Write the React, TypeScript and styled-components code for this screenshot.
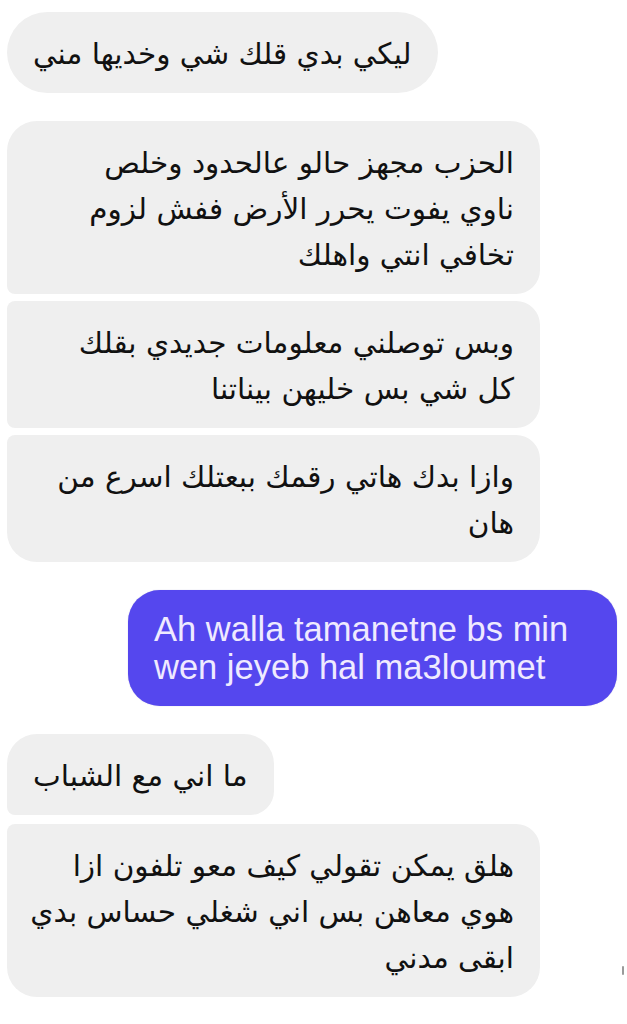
import React from "react";
import styled, { createGlobalStyle, css } from "styled-components";

const Global = createGlobalStyle`
  html, body { margin: 0; padding: 0; background: #ffffff; }
  body { width: 627px; height: 1024px; overflow: hidden; }
`;

const Page = styled.div`
  position: relative;
  width: 627px;
  height: 1024px;
  box-sizing: border-box;
  padding: 12px 10px 0 7px;
  display: flex;
  flex-direction: column;
  gap: 28px;
  background: #ffffff;
`;

const Group = styled.div<{ $side: "left" | "right"; $gap?: number }>`
  display: flex;
  flex-direction: column;
  gap: ${(p) => p.$gap ?? 7}px;
  align-items: ${(p) => (p.$side === "left" ? "flex-start" : "flex-end")};
`;

type Pos = "solo" | "first" | "middle" | "last";

const radius = (pos: Pos) => {
  const big = "30px";
  const small = "8px";
  switch (pos) {
    case "first":
      return `${big} ${big} 24px ${small}`;
    case "middle":
      return `${small} 24px 24px ${small}`;
    case "last":
      return `${small} 24px ${big} ${big}`;
    default:
      return "41px";
  }
};

const Received = styled.div<{ $pos: Pos; $wide?: boolean }>`
  box-sizing: border-box;
  background: #efefef;
  color: #111111;
  direction: rtl;
  text-align: right;
  font-family: "DejaVu Sans", "Noto Sans", sans-serif;
  font-size: 29.5px;
  line-height: 46px;
  padding: 19px 26px 16px 26px;
  border-radius: ${(p) => radius(p.$pos)};
  ${(p) =>
    p.$wide
      ? css`
          width: 533px;
        `
      : css`
          width: fit-content;
        `}
`;

const Line = styled.span`
  display: block;
  white-space: nowrap;
`;

const Sent = styled.div`
  box-sizing: border-box;
  width: 489px;
  background: #5547ee;
  color: #efeaff;
  font-family: "Liberation Sans", Arial, sans-serif;
  font-size: 34.5px;
  line-height: 38px;
  padding: 20px 18px 20px 26px;
  border-radius: 32px;
  box-shadow: 0 0 1px rgba(60, 50, 160, 0.4);
`;

const Tick = styled.span`
  position: absolute;
  right: 3px;
  top: 966px;
  width: 2px;
  height: 9px;
  border-radius: 1px;
  background: #9a9a9a;
`;

export default function App() {
  return (
    <>
      <Global />
      <Page>
        <Group $side="left">
          <Received $pos="solo">
            <Line>ليكي بدي قلك شي وخديها مني</Line>
          </Received>
        </Group>

        <Group $side="left" $gap={7}>
          <Received $pos="first" $wide>
            <Line>الحزب مجهز حالو عالحدود وخلص</Line>
            <Line>ناوي يفوت يحرر الأرض ففش لزوم</Line>
            <Line>تخافي انتي واهلك</Line>
          </Received>
          <Received $pos="middle" $wide>
            <Line>وبس توصلني معلومات جديدي بقلك</Line>
            <Line>كل شي بس خليهن بيناتنا</Line>
          </Received>
          <Received $pos="last" $wide>
            <Line>وازا بدك هاتي رقمك ببعتلك اسرع من</Line>
            <Line>هان</Line>
          </Received>
        </Group>

        <Group $side="right">
          <Sent>
            <Line>Ah walla tamanetne bs min</Line>
            <Line>wen jeyeb hal ma3loumet</Line>
          </Sent>
        </Group>

        <Group $side="left" $gap={9}>
          <Received $pos="first">
            <Line>ما اني مع الشباب</Line>
          </Received>
          <Received $pos="last" $wide>
            <Line>هلق يمكن تقولي كيف معو تلفون ازا</Line>
            <Line>هوي معاهن بس اني شغلي حساس بدي</Line>
            <Line>ابقى مدني</Line>
          </Received>
        </Group>
        <Tick />
      </Page>
    </>
  );
}
